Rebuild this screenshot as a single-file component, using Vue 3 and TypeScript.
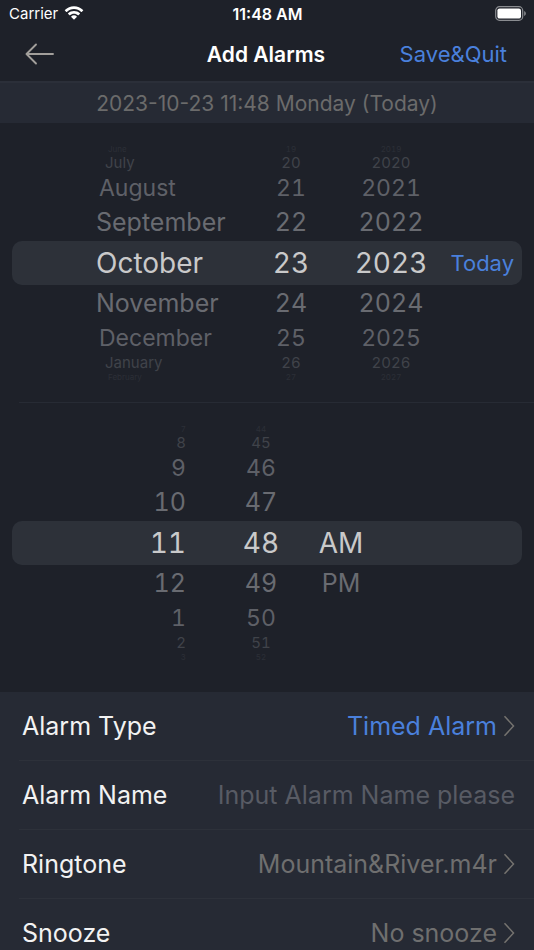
<script setup lang="ts">
import { computed, ref } from 'vue'

interface WheelColumn {
  key: string
  label: string
  rows: { text: string; level: number; offset: number }[]
  move: (offset: number) => void
}

const MONTHS = [
  'January', 'February', 'March', 'April', 'May', 'June', 'July',
  'August', 'September', 'October', 'November', 'December',
]
const OFFSETS = [-4, -3, -2, -1, 0, 1, 2, 3, 4]

const month = ref(9)
const day = ref(23)
const year = ref(2023)
const hour = ref(11)
const minute = ref(48)
const meridiem = ref(0)
const alarmName = ref('')

const wrap = (value: number, size: number) => ((value % size) + size) % size

const buildRows = (text: (offset: number) => string) =>
  OFFSETS.map((offset) => ({ offset, level: Math.abs(offset), text: text(offset) }))

const dateColumns = computed<WheelColumn[]>(() => [
  {
    key: 'month',
    label: 'Month',
    rows: buildRows((o) => MONTHS[wrap(month.value + o, 12)]),
    move: (o) => { month.value = wrap(month.value + o, 12) },
  },
  {
    key: 'day',
    label: 'Day',
    rows: buildRows((o) => String(wrap(day.value - 1 + o, 31) + 1)),
    move: (o) => { day.value = wrap(day.value - 1 + o, 31) + 1 },
  },
  {
    key: 'year',
    label: 'Year',
    rows: buildRows((o) => String(year.value + o)),
    move: (o) => { year.value += o },
  },
])

const timeColumns = computed<WheelColumn[]>(() => [
  {
    key: 'hour',
    label: 'Hour',
    rows: buildRows((o) => String(wrap(hour.value - 1 + o, 12) + 1)),
    move: (o) => { hour.value = wrap(hour.value - 1 + o, 12) + 1 },
  },
  {
    key: 'minute',
    label: 'Minute',
    rows: buildRows((o) => String(wrap(minute.value + o, 60)).padStart(2, '0')),
    move: (o) => { minute.value = wrap(minute.value + o, 60) },
  },
  {
    key: 'meridiem',
    label: 'AM or PM',
    rows: buildRows((o) => ['AM', 'PM'][meridiem.value + o] ?? ''),
    move: (o) => { meridiem.value += o },
  },
])

function goToday() {
  month.value = 9
  day.value = 23
  year.value = 2023
}
</script>

<template>
  <div class="screen">
    <div class="status">
      <div class="carrier">
        <span>Carrier</span>
        <svg width="20" height="15" viewBox="0 0 20 15" fill="#fff" aria-hidden="true">
          <path d="M10 3.1c2.8 0 5.3 1.1 7.2 2.9.15.14.38.14.52 0l1.4-1.4c.15-.15.15-.4 0-.55C16.700 1.700 13.500.3 10 .3S3.300 1.700.9 4.050c-.15.15-.15.4 0 .55L2.300 6c.14.14.37.14.52 0C4.700 4.200 7.200 3.100 10 3.100z" />
          <path d="M10 7.700c1.550 0 2.950.6 4 1.550.16.14.38.14.53 0l1.400-1.400c.16-.15.15-.4 0-.55C14.350 5.850 12.280 5 10 5s-4.350.85-5.930 2.300c-.16.15-.16.4 0 .55l1.400 1.400c.15.14.38.14.53 0 1.050-.95 2.450-1.550 4-1.550z" />
          <path d="M12.800 10.400c.15.15.15.38-.01.53l-2.520 2.500c-.15.15-.39.15-.54 0l-2.520-2.500c-.16-.15-.16-.38-.01-.53.75-.65 1.720-1.050 2.800-1.050s2.050.4 2.800 1.050z" />
        </svg>
      </div>
      <div class="clock">11:48 AM</div>
      <div class="battery">
        <svg width="31" height="15" viewBox="0 0 31 15" aria-hidden="true">
          <rect x=".7" y=".7" width="27" height="13.600" rx="3.800" fill="none" stroke="#8a8c90" stroke-width="1.200" />
          <rect x="2.400" y="2.400" width="23.600" height="10.200" rx="2.200" fill="#fff" />
          <path d="M29.200 5v5c1-.4 1.600-1.400 1.600-2.500S30.200 5.400 29.200 5z" fill="#8a8c90" />
        </svg>
      </div>
    </div>

    <header class="nav">
      <button class="back" type="button" aria-label="Back">
        <svg width="30" height="22" viewBox="0 0 30 22" fill="none" stroke="#a29f9b" stroke-width="1.900" stroke-linecap="round" stroke-linejoin="round" aria-hidden="true">
          <path d="M28 11H1.500M11 1.500L1.500 11l9.500 9.500" />
        </svg>
      </button>
      <h1>Add Alarms</h1>
      <button class="save" type="button">Save&amp;Quit</button>
    </header>

    <div class="banner">2023-10-23 11:48 Monday (Today)</div>

    <section class="wheel date">
      <div class="highlight"></div>
      <div v-for="col in dateColumns" :key="col.key" class="column" :class="col.key" role="group" :aria-label="col.label">
        <button
          v-for="row in col.rows"
          :key="row.offset"
          type="button"
          class="row"
          :class="'level-' + row.level"
          @click="col.move(row.offset)"
        >{{ row.text }}</button>
      </div>
      <button class="today" type="button" @click="goToday">Today</button>
    </section>

    <section class="wheel time">
      <div class="highlight"></div>
      <div v-for="col in timeColumns" :key="col.key" class="column" :class="col.key" role="group" :aria-label="col.label">
        <button
          v-for="row in col.rows"
          :key="row.offset"
          type="button"
          class="row"
          :class="'level-' + row.level"
          :disabled="!row.text"
          @click="col.move(row.offset)"
        >{{ row.text }}</button>
      </div>
    </section>

    <section class="settings">
      <button class="item" type="button">
        <span class="name">Alarm Type</span>
        <span class="value accent">Timed Alarm</span>
        <svg class="chevron" width="12" height="22" viewBox="0 0 12 22" aria-hidden="true"><path d="M1.500 1.200L10.500 11l-9 9.800" /></svg>
      </button>
      <div class="item">
        <label class="name" for="alarm-name">Alarm Name</label>
        <input id="alarm-name" v-model="alarmName" type="text" placeholder="Input Alarm Name please" />
      </div>
      <button class="item" type="button">
        <span class="name">Ringtone</span>
        <span class="value">Mountain&amp;River.m4r</span>
        <svg class="chevron" width="12" height="22" viewBox="0 0 12 22" aria-hidden="true"><path d="M1.500 1.200L10.500 11l-9 9.800" /></svg>
      </button>
      <button class="item" type="button">
        <span class="name">Snooze</span>
        <span class="value">No snooze</span>
        <svg class="chevron" width="12" height="22" viewBox="0 0 12 22" aria-hidden="true"><path d="M1.500 1.200L10.500 11l-9 9.800" /></svg>
      </button>
    </section>
  </div>
</template>

<style>
body {
  background: #1e2129;
}
</style>

<style scoped>
.screen {
  height: 100vh;
  overflow-y: auto;
  scrollbar-width: none;
  background: #1e2129;
  color: #f2f2f2;
  font-family: Inter, "Liberation Sans", sans-serif;
}

button,
input {
  margin: 0;
  padding: 0;
  border: 0;
  background: none;
  color: inherit;
  font: inherit;
}

svg {
  display: block;
}

.status {
  display: grid;
  grid-template-columns: 1fr auto 1fr;
  align-items: center;
  height: 27px;
  padding: 0 8px 0 9px;
  color: #fff;
  font-size: 15px;
}

.carrier {
  display: flex;
  align-items: center;
  gap: 6px;
}

.clock {
  font-size: 16px;
  font-weight: 600;
}

.battery {
  justify-self: end;
}

.nav {
  display: grid;
  grid-template-columns: 1fr auto 1fr;
  align-items: center;
  height: 54px;
  padding: 0 27px 0 25px;
  border-bottom: 2px solid #2b2f39;
  font-size: 22px;
}

.nav h1 {
  margin: 0;
  color: #fff;
  font-size: 21px;
  font-weight: 600;
}

.back {
  justify-self: start;
}

.save {
  justify-self: end;
  color: #4a80dc;
}

.banner {
  height: 40px;
  background: #262a34;
  color: #6b6b6b;
  font-size: 21px;
  line-height: 42px;
  text-align: center;
}

.wheel {
  display: grid;
  align-items: center;
  padding: 21px 12px;
  font-variant-numeric: tabular-nums;
}

.date {
  grid-template-columns: 84fr 150fr 90fr 110fr 76fr;
  padding-bottom: 20px;
  border-bottom: 1px solid;
  border-image: linear-gradient(to right, transparent 20px, #272b34 20px) 1;
}

.time {
  grid-template-columns: 204fr 90fr 70fr 146fr;
  padding-bottom: 30px;
}

.highlight {
  grid-area: 1 / 1 / 2 / -1;
  height: 44px;
  border-radius: 10px;
  background: #2d3139;
}

.column {
  display: flex;
  flex-direction: column;
  grid-row: 1;
  min-width: 0;
}

.month {
  grid-column: 2;
}

.day {
  grid-column: 3;
}

.year {
  grid-column: 4;
}

.hour {
  grid-column: 1;
}

.minute {
  grid-column: 2;
}

.meridiem {
  grid-column: 3;
}

.row {
  display: block;
  text-align: center;
  white-space: nowrap;
}

.month .row {
  text-align: left;
}

.hour .row {
  padding-right: 30px;
  text-align: right;
}

.level-0 {
  height: 44px;
  color: #c9c9ca;
  font-size: 28px;
  line-height: 44px;
}

.level-1 {
  height: 37px;
  color: #696b71;
  font-size: 25px;
  line-height: 37px;
}

.level-2 {
  height: 32px;
  color: #5e6067;
  font-size: 23px;
  line-height: 32px;
}

.level-3 {
  height: 18px;
  color: #40434a;
  font-size: 15px;
  line-height: 18px;
}

.level-4 {
  height: 10px;
  color: #2c2f37;
  font-size: 8px;
  line-height: 10px;
}

.month .level-2 {
  padding-left: 3px;
}

.month .level-3 {
  padding-left: 9px;
}

.month .level-4 {
  padding-left: 12px;
}

.today {
  grid-area: 1 / 5;
  padding-right: 8px;
  color: #4a80dc;
  font-size: 22px;
  text-align: right;
}

.settings {
  background: #262a34;
}

.item {
  box-sizing: border-box;
  display: flex;
  align-items: center;
  width: 100%;
  height: 69px;
  padding: 0 19px 0 22px;
  border-bottom: 1px solid;
  border-image: linear-gradient(to right, transparent 20px, #2d313a 20px) 1;
  font-size: 25px;
  text-align: left;
}

.name {
  flex: none;
}

.value {
  flex: 1;
  color: #6f6f6f;
  text-align: right;
}

.accent {
  color: #4a80dc;
}

.chevron {
  flex: none;
  margin-left: 6px;
  fill: none;
  stroke: #75736f;
  stroke-width: 1.5;
}

.item input {
  flex: 1;
  min-width: 0;
  outline: none;
  text-align: right;
}

.item input::placeholder {
  color: #585b64;
  opacity: 1;
}
</style>
